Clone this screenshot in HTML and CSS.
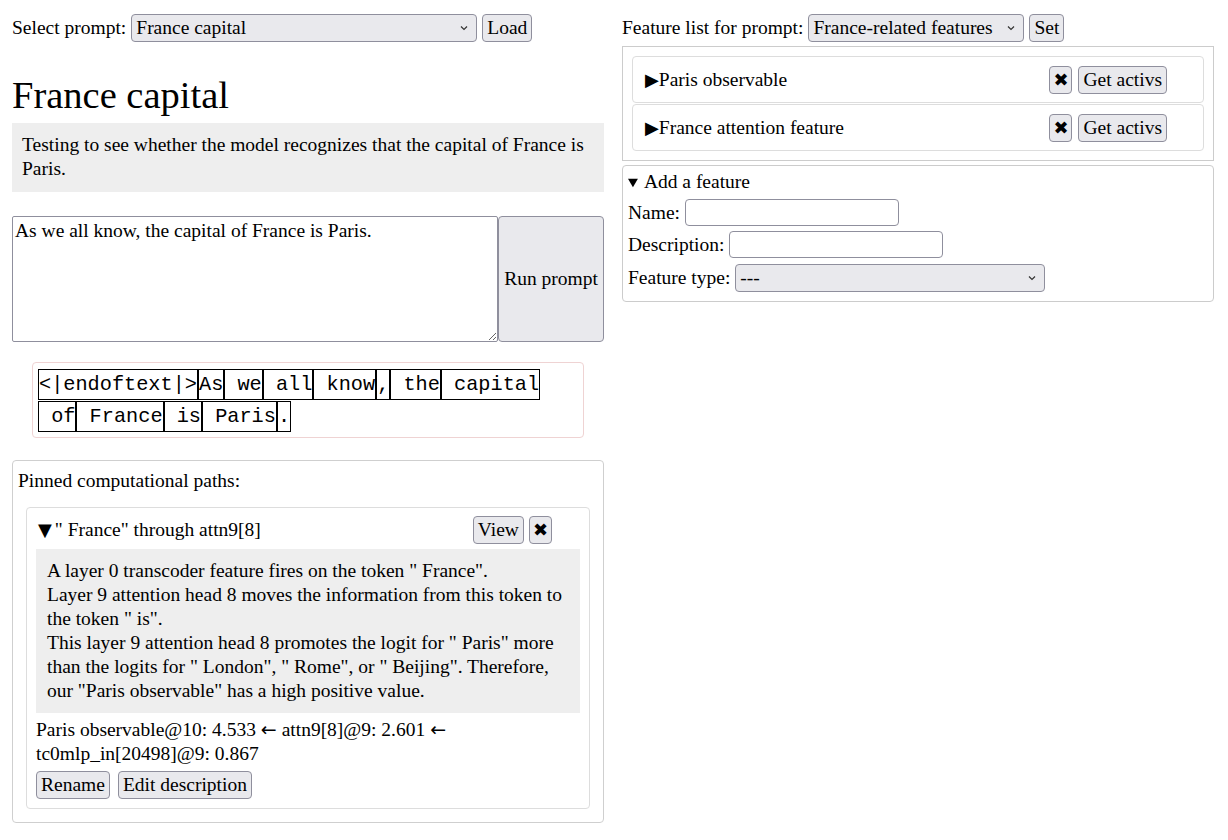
FILE: index.html
```html
<!DOCTYPE html>
<html lang="en">
<head>
<meta charset="utf-8">
<title>France capital</title>
<link rel="stylesheet" href="styles.css">
</head>
<body>
<div class="page">
  <div class="col">
    <div class="toolbar">
      <label for="prompt-select">Select prompt:</label>
      <select id="prompt-select" class="sel sel-prompt">
        <option>France capital</option>
      </select>
      <button class="btn">Load</button>
    </div>

    <h1 class="title">France capital</h1>
    <div class="desc">Testing to see whether the model recognizes that the capital of France is Paris.</div>

    <div class="prompt-row">
      <textarea class="prompt-input">As we all know, the capital of France is Paris.</textarea>
      <button class="btn run-btn">Run prompt</button>
    </div>

    <div class="tokens">
      <span class="tok">&lt;|endoftext|&gt;</span><span class="tok">As</span><span class="tok"> we</span><span class="tok"> all</span><span class="tok"> know</span><span class="tok">,</span><span class="tok"> the</span><span class="tok"> capital</span><span class="tok"> of</span><span class="tok"> France</span><span class="tok"> is</span><span class="tok"> Paris</span><span class="tok">.</span>
    </div>

    <div class="pinned">
      <div class="pinned-title">Pinned computational paths:</div>
      <div class="path-card">
        <div class="path-head">
          <span class="path-name"><span class="tri tri-open">▼</span>" France" through attn9[8]</span>
          <button class="btn">View</button>
          <button class="btn x-btn">✖</button>
        </div>
        <div class="path-desc">A layer 0 transcoder feature fires on the token " France".<br>Layer 9 attention head 8 moves the information from this token to the token " is".<br>This layer 9 attention head 8 promotes the logit for " Paris" more than the logits for " London", " Rome", or " Beijing". Therefore, our "Paris observable" has a high positive value.</div>
        <div class="path-chain">Paris observable@10: 4.533 <span class="arrow">←</span> attn9[8]@9: 2.601 <span class="arrow">←</span> tc0mlp_in[20498]@9: 0.867</div>
        <div class="path-actions">
          <button class="btn">Rename</button>
          <button class="btn">Edit description</button>
        </div>
      </div>
    </div>
  </div>

  <div class="col">
    <div class="toolbar">
      <label for="list-select">Feature list for prompt:</label>
      <select id="list-select" class="sel sel-list">
        <option>France-related features</option>
      </select>
      <button class="btn">Set</button>
    </div>

    <div class="feature-list">
      <div class="feature">
        <span class="feature-name"><span class="tri">▶</span>Paris observable</span>
        <button class="btn x-btn">✖</button>
        <button class="btn">Get activs</button>
      </div>
      <div class="feature">
        <span class="feature-name"><span class="tri">▶</span>France attention feature</span>
        <button class="btn x-btn">✖</button>
        <button class="btn">Get activs</button>
      </div>
    </div>

    <details class="add-feature" open>
      <summary>Add a feature</summary>
      <div class="form-row form-row-first">
        <label for="f-name">Name:</label>
        <input id="f-name" class="text-input" type="text">
      </div>
      <div class="form-row">
        <label for="f-desc">Description:</label>
        <input id="f-desc" class="text-input" type="text">
      </div>
      <div class="form-row form-row-select">
        <label for="f-type">Feature type:</label>
        <select id="f-type" class="sel sel-type">
          <option>---</option>
        </select>
      </div>
    </details>
  </div>
</div>
</body>
</html>
```

FILE: styles.css
```css
body {
  margin: 0;
  font-family: "Liberation Serif", "Times New Roman", serif;
  font-size: 19.5px;
  line-height: 24px;
  color: #000;
  background: #fff;
}

.page {
  display: grid;
  grid-template-columns: 1fr 1fr;
  column-gap: 18px;
  padding: 14px 14px 0 12px;
  align-items: start;
}

.col {
  min-width: 0;
}

/* form controls */
.btn {
  font: inherit;
  line-height: 24px;
  color: #000;
  background: #e9e9ed;
  border: 1px solid #8f8f9d;
  border-radius: 4px;
  padding: 1px 4px;
  margin: 0;
}

.x-btn {
  font-family: "DejaVu Sans", sans-serif;
  font-size: 18px;
  padding: 1px 3px;
}

.sel {
  appearance: none;
  -webkit-appearance: none;
  font: inherit;
  line-height: 24px;
  height: 28px;
  color: #000;
  background-color: #e9e9ed;
  background-image: url("data:image/svg+xml,%3Csvg xmlns='http://www.w3.org/2000/svg' width='8' height='6' viewBox='0 0 8 6'%3E%3Cpath d='M1 1.5 L4 4.5 L7 1.5' fill='none' stroke='%23333' stroke-width='1.2'/%3E%3C/svg%3E");
  background-repeat: no-repeat;
  background-position: right 8px center;
  border: 1px solid #8f8f9d;
  border-radius: 4px;
  padding: 1px 20px 1px 4px;
  margin: 0;
}

.sel-prompt { width: 346px; }
.sel-list { width: 216px; }
.sel-type { width: 310px; }

.toolbar {
  display: flex;
  align-items: center;
  gap: 5px;
  height: 28px;
}

/* left column */
.title {
  font-size: 38.5px;
  line-height: 44px;
  font-weight: normal;
  margin: 31px 0 6px;
}

.desc {
  background: #eeeeee;
  padding: 10px 10px 11px;
}

.prompt-row {
  display: flex;
  margin-top: 24px;
}

.prompt-input {
  flex: 1;
  height: 126px;
  box-sizing: border-box;
  font: inherit;
  line-height: 24px;
  color: #000;
  border: 1px solid #8f8f9d;
  border-radius: 2px;
  padding: 2px 2px;
  margin: 0;
  resize: both;
}

.run-btn {
  width: 106px;
  padding: 0;
}

.tokens {
  margin: 20px 20px 0;
  border: 1px solid #efd3d3;
  border-radius: 4px;
  padding: 6px 8px 5px 5px;
  display: flex;
  flex-wrap: wrap;
  row-gap: 1px;
}

.tok {
  font-family: "Liberation Mono", "Courier New", monospace;
  font-size: 20.25px;
  line-height: 29px;
  white-space: pre;
  border: 1px solid #000;
}

.pinned {
  margin-top: 22px;
  border: 1px solid #cfcfcf;
  border-radius: 4px;
  padding: 8px 5px 13px;
}

.path-card {
  margin: 14px 8px 0;
  border: 1px solid #dddddd;
  border-radius: 4px;
  padding: 8px 9px 9px;
}

.path-head {
  display: flex;
  align-items: center;
  gap: 5px;
  padding: 0 28px 0 2px;
}

.path-name {
  flex: 1;
}

.tri {
  font-family: "DejaVu Sans", sans-serif;
  font-size: 18px;
}

.tri-open {
  margin-right: 3px;
}

.arrow {
  font-family: "DejaVu Sans", sans-serif;
  font-size: 19px;
}

.path-desc {
  margin-top: 5px;
  background: #eeeeee;
  padding: 10px 11px;
}

.path-chain {
  margin-top: 4px;
}

.path-actions {
  display: flex;
  gap: 8px;
  margin-top: 5px;
}

/* right column */
.feature-list {
  margin-top: 4px;
  border: 1px solid #cccccc;
  padding: 9px;
}

.feature {
  display: flex;
  align-items: center;
  gap: 6px;
  border: 1px solid #dddddd;
  border-radius: 4px;
  padding: 9px 36px 8px 12px;
}

.feature + .feature {
  margin-top: 1px;
}

.feature-name {
  flex: 1;
}

.add-feature {
  margin-top: 4px;
  border: 1px solid #cccccc;
  border-radius: 4px;
  padding: 4px 5px 9px;
}

.add-feature summary {
  cursor: pointer;
}

.add-feature summary::marker {
  font-size: 15px;
}

.form-row {
  display: flex;
  align-items: center;
  gap: 5px;
  margin-top: 5px;
}

.form-row-first {
  margin-top: 4px;
}

.form-row-select {
  margin-top: 6px;
}

.text-input {
  font: inherit;
  width: 214px;
  height: 27px;
  box-sizing: border-box;
  border: 1px solid #8f8f9d;
  border-radius: 4px;
  padding: 1px 4px;
  margin: 0;
}
```
